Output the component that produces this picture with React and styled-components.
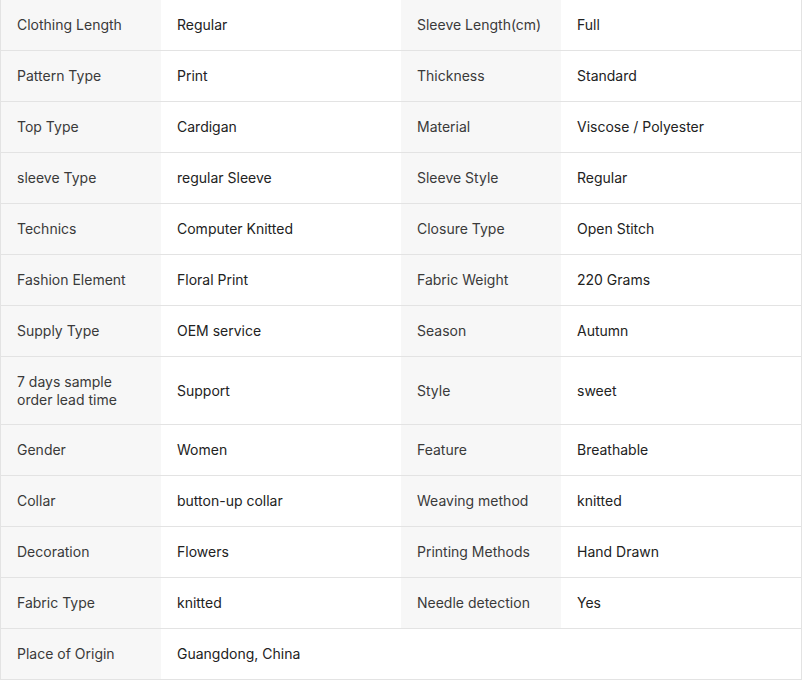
import React from "react";
import styled, { createGlobalStyle } from "styled-components";

const GlobalStyle = createGlobalStyle`
	body {
		margin: 0;
		background: #fff;
		font-family: Inter, "Noto Sans", sans-serif;
	}
`;

const SpecTable = styled.div`
	width: 802px;
	border-left: 1px solid #e3e3e3;
	border-right: 1px solid #e3e3e3;
	box-sizing: border-box;
	font-size: 14px;
	line-height: 17.5px;
`;

const Row = styled.div`
	display: grid;
	grid-template-columns: 160px 240px 160px 240px;
	border-bottom: 1px solid #e3e3e3;
`;

const Label = styled.div`
	box-sizing: border-box;
	min-height: 50px;
	background: #f7f7f7;
	color: #3a3a3a;
	padding: 16px;
	display: flex;
	align-items: center;
`;

const Value = styled.div`
	box-sizing: border-box;
	min-height: 50px;
	color: #222;
	padding: 16px;
	display: flex;
	align-items: center;
	grid-column: ${(p) => (p.$wide ? "2 / 5" : "auto")};
`;

const specs = [
	["Clothing Length", "Regular", "Sleeve Length(cm)", "Full"],
	["Pattern Type", "Print", "Thickness", "Standard"],
	["Top Type", "Cardigan", "Material", "Viscose / Polyester"],
	["sleeve Type", "regular Sleeve", "Sleeve Style", "Regular"],
	["Technics", "Computer Knitted", "Closure Type", "Open Stitch"],
	["Fashion Element", "Floral Print", "Fabric Weight", "220 Grams"],
	["Supply Type", "OEM service", "Season", "Autumn"],
	["7 days sample order lead time", "Support", "Style", "sweet"],
	["Gender", "Women", "Feature", "Breathable"],
	["Collar", "button-up collar", "Weaving method", "knitted"],
	["Decoration", "Flowers", "Printing Methods", "Hand Drawn"],
	["Fabric Type", "knitted", "Needle detection", "Yes"],
	["Place of Origin", "Guangdong, China"],
];

const App = () => {
	return (
		<>
			<GlobalStyle />
			<SpecTable>
				{specs.map((row, i) => (
					<Row key={i}>
						<Label>{row[0]}</Label>
						<Value $wide={row.length === 2}>{row[1]}</Value>
						{row.length > 2 && (
							<>
								<Label>{row[2]}</Label>
								<Value>{row[3]}</Value>
							</>
						)}
					</Row>
				))}
			</SpecTable>
		</>
	);
};

export default App;
